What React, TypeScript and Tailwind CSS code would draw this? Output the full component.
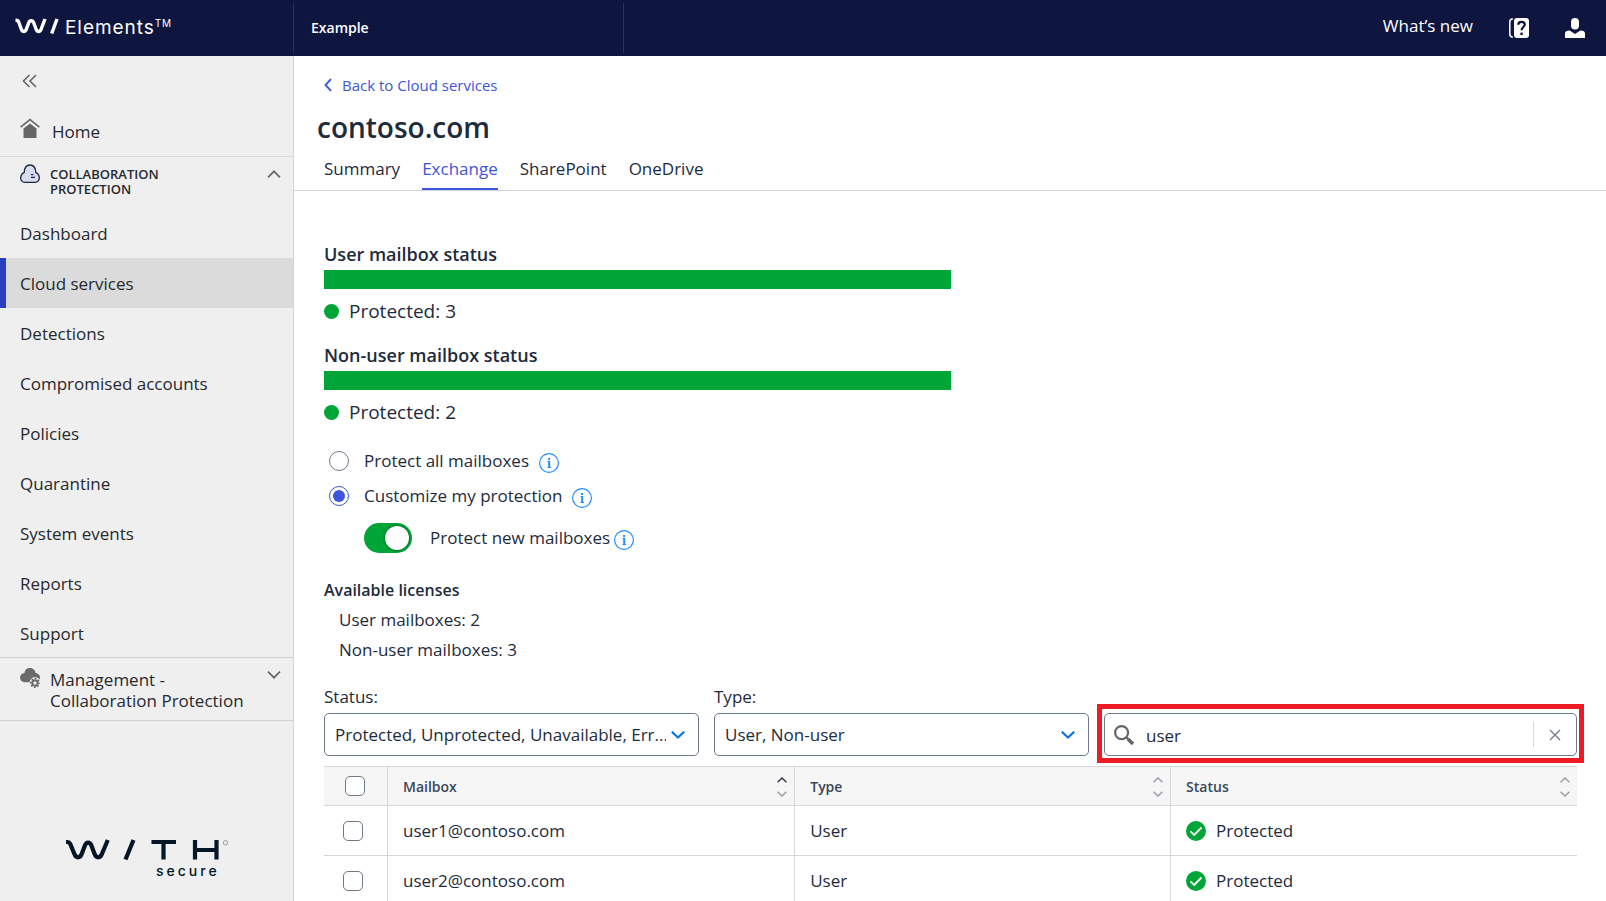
import { useState } from "react";

const NAV_ITEMS = [
  "Dashboard",
  "Cloud services",
  "Detections",
  "Compromised accounts",
  "Policies",
  "Quarantine",
  "System events",
  "Reports",
  "Support",
];

const TABS = ["Summary", "Exchange", "SharePoint", "OneDrive"];

const MAILBOXES = [
  { address: "user1@contoso.com", type: "User", status: "Protected" },
  { address: "user2@contoso.com", type: "User", status: "Protected" },
];

type ChevronProps = { className: string; d: string; box: string; width?: number };

function Chevron({ className, d, box, width = 2 }: ChevronProps) {
  return (
    <svg className={className} viewBox={box} fill="none" stroke="currentColor" strokeWidth={width} aria-hidden="true">
      <path d={d} />
    </svg>
  );
}

function HomeIcon() {
  return (
    <svg className="h-5 w-5 shrink-0" viewBox="0 0 20 20" aria-hidden="true">
      <path d="M0.6 9.1 10 1.6l9.400 7.500" fill="none" stroke="#6a6a6a" strokeWidth="1.700" />
      <path d="M10 5.400 16.500 10.500V20h-13v-9.500z" fill="#666" />
    </svg>
  );
}

function CloudIcon() {
  return (
    <svg className="h-5 w-5 shrink-0" viewBox="0 0 20 20" aria-hidden="true">
      <path
        d="M4.800 18.400h10.400a4.100 4.100 0 0 0 4.100-4.200c0-2.600-1.100-4.900-3.500-5.600C15.600 3.800 13.400 1 10 1S4.400 3.800 4.200 8.600C1.800 9.300.7 11.600.7 14.200a4.100 4.100 0 0 0 4.100 4.200z"
        fill="#d8dcf0"
        stroke="#1d2a3a"
        strokeWidth="1.300"
      />
      <path d="M11 10.700h2.300M11 13.300h4" stroke="#1d2a3a" strokeWidth="1.300" />
    </svg>
  );
}

function CloudGearIcon() {
  return (
    <svg className="h-5 w-5 shrink-0" viewBox="0 0 20 20" aria-hidden="true">
      <path
        d="M4.500 14.300h5.200c.2-3 2.400-5 5.300-5 2 0 3.500.8 4.400 2.200.4-.6.6-1.300.6-2.100 0-2.300-1.700-4-4.300-4.300C15.300 2 12.700 0 9.800 0 6.900 0 4.800 1.900 4.500 4.900 1.800 5.100 0 7 0 9.600c0 2.700 1.900 4.700 4.500 4.700z"
        fill="#6a6a6a"
      />
      <circle cx="15" cy="15" r="2.700" fill="none" stroke="#6a6a6a" strokeWidth="2" />
      <circle cx="15" cy="15" r="4.300" fill="none" stroke="#6a6a6a" strokeWidth="1.600" strokeDasharray="1.700 1.677" strokeDashoffset="0.850" />
    </svg>
  );
}

function HelpIcon() {
  return (
    <svg className="h-5 w-5" viewBox="0 0 20 20" aria-hidden="true">
      <path d="M3.800 0.700C1.800 1 0.800 2 0.800 4v12c0 2 1 3 3 3.300" fill="none" stroke="#fff" strokeWidth="1.500" />
      <rect x="5" y="0" width="15" height="20" rx="3" fill="#fff" />
      <path d="M9.300 6.800c0-2 1.300-3 3.200-3s3.300 1 3.300 2.700c0 2.600-3.200 2.500-3.200 5.700" fill="none" stroke="#0e153f" strokeWidth="2.200" />
      <rect x="11.400" y="14.600" width="2.400" height="2.400" fill="#0e153f" />
    </svg>
  );
}

function UserIcon() {
  return (
    <svg className="h-5 w-5" viewBox="0 0 20 20" fill="#fff" aria-hidden="true">
      <rect x="6" y="0" width="8" height="11.500" rx="4" />
      <path d="M0 20v-4.500C0 13.400 1.600 12.700 4.600 12.500L10 16l5.400-3.500c3 .2 4.600.9 4.600 3V20z" />
    </svg>
  );
}

function InfoButton({ label }: { label: string }) {
  return (
    <button type="button" aria-label={label} className="mt-1 block h-5 w-5 shrink-0">
      <svg className="h-5 w-5" viewBox="0 0 20 20" fill="none" stroke="#1f8fff" aria-hidden="true">
        <circle cx="10" cy="10" r="9.400" strokeWidth="1.200" />
        <path d="M8.500 8.500h1.500M8.500 14.500h3.500" strokeWidth="1" />
        <path d="M10.200 8v7M10.100 5v2" strokeWidth="2" />
      </svg>
    </button>
  );
}

function CheckBadge() {
  return (
    <svg className="h-5 w-5 shrink-0" viewBox="0 0 20 20" aria-hidden="true">
      <circle cx="10" cy="10" r="10" fill="#00a537" />
      <path d="m4.400 10.400 3.800 3.500 7.300-7.400" fill="none" stroke="#fff" strokeWidth="1.800" />
    </svg>
  );
}

function SearchIcon() {
  return (
    <svg className="h-5 w-5 shrink-0" viewBox="0 0 20 20" fill="none" stroke="#666" aria-hidden="true">
      <circle cx="7.600" cy="7.600" r="6.500" strokeWidth="2.200" />
      <path d="m12.300 12.300 2 2" strokeWidth="2.200" />
      <path d="m14 14 5 5" strokeWidth="3.600" />
    </svg>
  );
}

function BrandMark() {
  return (
    <svg className="h-4 w-11" viewBox="0 0 44 16" fill="none" stroke="#fff" strokeWidth="3.400" aria-hidden="true">
      <path d="M.5 2.300h.8c1.500 0 2 .6 2.500 2l2.500 6.900c1 3 4 3 5 0l2.400-6.400c1-2.800 4-2.800 5 0l2.400 6.400c1 3 4 3 5 0L30 1" />
      <path d="M42 1l-5.300 14.500" />
    </svg>
  );
}

function SortArrows({ up }: { up: boolean }) {
  return (
    <span className="flex flex-col gap-2 pt-0.5">
      <Chevron className={up ? "h-1.5 w-2.5 text-[#2f3b4a]" : "h-1.5 w-2.5 text-[#97a0aa]"} box="0 0 10 6" d="M.6 5.300 5 1l4.400 4.300" width={1.5} />
      <Chevron className="h-1.5 w-2.5 text-[#97a0aa]" box="0 0 10 6" d="M.6.7 5 5 9.400.7" width={1.5} />
    </span>
  );
}

function Header() {
  return (
    <header className="flex h-14 shrink-0 items-center bg-[#0e153f] text-white">
      <a href="#home" className="flex h-full w-[293px] shrink-0 items-start gap-1.5 pt-[18px] pl-[15px]">
        <BrandMark />
        <span className="flex items-start pt-px font-['Inter'] text-[19px] leading-[18px] tracking-wider">
          Elements<span className="text-[10px] leading-2">TM</span>
        </span>
      </a>
      <div className="flex h-[50px] w-[331px] items-center border-x border-[#2b3261] pb-0.5 pl-[17px] text-[14px] font-semibold">
        Example
      </div>
      <div className="ml-auto flex items-center pr-[21px]">
        <a href="#whats-new" className="pb-1 text-[17px]">What’s new</a>
        <button type="button" aria-label="Help" className="ml-9">
          <HelpIcon />
        </button>
        <button type="button" aria-label="Account" className="ml-9">
          <UserIcon />
        </button>
      </div>
    </header>
  );
}

function Sidebar() {
  return (
    <aside className="flex w-[294px] shrink-0 flex-col border-r border-[#d5d5d5] bg-[#efefef] text-[17px] text-[#26292e]">
      <button type="button" aria-label="Collapse menu" className="mt-[18px] ml-[22px] h-3.5 w-4 text-[#6a6a6a]">
        <Chevron className="h-3.5 w-4" box="0 0 16 14" d="M7.500 1 1.500 7l6 6M14 1 8 7l6 6" width={1.700} />
      </button>
      <a href="#home" className="mt-[30px] flex h-[39px] items-start gap-3 border-b border-[#d9dadb] pl-5">
        <HomeIcon />
        <span className="pt-0.5 leading-6">Home</span>
      </a>
      <button type="button" aria-expanded="true" className="flex h-[51px] items-start pt-[7px] pr-3 pl-5 text-left">
        <CloudIcon />
        <span className="flex-1 pt-[3px] pl-2.5 text-[13px] leading-[15px] font-semibold">
          COLLABORATION
          <br />
          PROTECTION
        </span>
        <Chevron className="mt-1.5 h-2 w-3.5 text-[#666]" box="0 0 14 8" d="M1 7.300 7 1.300l6 6" width={1.700} />
      </button>
      <nav aria-label="Collaboration protection" className="-mb-px">
        {NAV_ITEMS.map((item) => (
          <a
            key={item}
            href="#section"
            aria-current={item === "Cloud services" ? "page" : undefined}
            className={
              item === "Cloud services"
                ? "flex h-[50px] items-center border-l-[6px] border-[#2a3fba] bg-[#dbdbdb] pt-0.5 pl-3.5"
                : "flex h-[50px] items-center pt-0.5 pl-5"
            }
          >
            {item}
          </a>
        ))}
      </nav>
      <button type="button" aria-expanded="false" className="flex h-16 items-start border-y border-[#cfd0d1] pt-2.5 pr-3 pl-5 text-left">
        <CloudGearIcon />
        <span className="flex-1 pt-px pl-2.5 leading-[21px]">
          Management -
          <br />
          Collaboration Protection
        </span>
        <Chevron className="mt-[3px] h-2 w-3.5 text-[#666]" box="0 0 14 8" d="M1 .7l6 6 6-6" width={1.700} />
      </button>
      <div className="mt-auto pb-[22px] pl-[66px]">
        <svg className="h-10 w-[164px]" viewBox="0 0 164 40" role="img" aria-label="WithSecure" fill="none" stroke="#051626" strokeWidth="4.200">
          <path d="M0 3h1.200c2 0 2.700 1 3.400 2.800L8.300 14.800c1.700 4.700 5.800 4.700 7.500 0l3-8c1.500-4.200 5.200-4.200 6.700 0l3 8c1.700 4.700 5.800 4.700 7.500 0L41.800 1" />
          <path d="M67.500 1 59.500 20.500" />
          <path d="M85.500 3H110M97.500 3v17.500" />
          <path d="M129 1v19.500M150.500 1v19.500M129 11h21" />
          <circle cx="159.500" cy="3.800" r="2.200" stroke="#7c858d" strokeWidth="0.800" />
          <text x="90" y="37" fill="#051626" stroke="none" className="font-['Inter'] text-[14px] font-medium tracking-[3px]">
            secure
          </text>
        </svg>
      </div>
    </aside>
  );
}

function StatusBar({ title, count }: { title: string; count: number }) {
  return (
    <section>
      <h2 className="text-[18px] leading-7 font-semibold">{title}</h2>
      <div className="mt-0.5 h-[19px] w-1/2 bg-[#00a537]" />
      <p className="mt-2 flex items-center gap-2.5 text-[19px] leading-7">
        <span className="h-[15px] w-[15px] rounded-full bg-[#00a537]" />
        Protected: {count}
      </p>
    </section>
  );
}

function Protection() {
  const [mode, setMode] = useState("custom");
  const [protectNew, setProtectNew] = useState(true);
  const radio =
    "h-5 w-5 shrink-0 appearance-none rounded-full border border-[#6f7a88] bg-white checked:border-[#3d55dc] checked:bg-[#3d55dc] checked:bg-clip-content checked:p-[3px]";
  return (
    <div className="mt-[23px] text-[17px] leading-6">
      <div className="flex h-6 items-center pl-[5px]">
        <input id="all" type="radio" name="mode" className={radio} checked={mode === "all"} onChange={() => setMode("all")} />
        <label htmlFor="all" className="mr-2.5 pl-[15px]">Protect all mailboxes</label>
        <InfoButton label="About protecting all mailboxes" />
      </div>
      <div className="mt-[11px] flex h-6 items-center pl-[5px]">
        <input id="custom" type="radio" name="mode" className={radio} checked={mode === "custom"} onChange={() => setMode("custom")} />
        <label htmlFor="custom" className="mr-2.5 pl-[15px]">Customize my protection</label>
        <InfoButton label="About custom protection" />
      </div>
      <div className="mt-[15px] flex h-[30px] items-center pl-10">
        <input
          id="new-mailboxes"
          type="checkbox"
          role="switch"
          checked={protectNew}
          onChange={() => setProtectNew(!protectNew)}
          className="flex h-[30px] w-12 shrink-0 appearance-none items-center rounded-full bg-gray-400 p-[3px] before:h-6 before:w-6 before:rounded-full before:bg-white before:shadow-[0_0_3px_rgba(0,0,0,0.6)] before:content-[''] checked:justify-end checked:bg-[#00a537]"
        />
        <label htmlFor="new-mailboxes" className="mr-1 pl-[18px]">Protect new mailboxes</label>
        <InfoButton label="About protecting new mailboxes" />
      </div>
    </div>
  );
}

function FilterSelect({ id, label, value }: { id: string; label: string; value: string }) {
  return (
    <div className="min-w-0 flex-[375]">
      <label htmlFor={id} className="block leading-6">{label}</label>
      <div className="relative mt-1">
        <select id={id} className="block h-[43px] w-full appearance-none rounded-[5px] border border-[#6f7a88] bg-white pr-8 pl-2.5">
          <option>{value}</option>
        </select>
        <span className="pointer-events-none absolute inset-y-0 right-3.5 flex items-center text-[#0b74e5]">
          <Chevron className="h-2 w-3.5" box="0 0 14 8" d="M.8.7 7 6.500 13.200.7" width={2.200} />
        </span>
      </div>
    </div>
  );
}

function Filters() {
  const [query, setQuery] = useState("user");
  return (
    <div className="mt-5 flex items-end gap-[15px] text-[17px]">
      <FilterSelect id="status" label="Status:" value="Protected, Unprotected, Unavailable, Err..." />
      <FilterSelect id="type" label="Type:" value="User, Non-user" />
      <div className="relative min-w-0 flex-[473]">
        <div className="flex h-[43px] items-center rounded-[5px] border border-[#6f7a88] bg-white pl-[9px]">
          <SearchIcon />
          <input
            type="text"
            aria-label="Search mailboxes"
            value={query}
            onChange={(e) => setQuery(e.target.value)}
            className="min-w-0 flex-1 pt-0.5 pl-3 outline-none"
          />
          <button type="button" aria-label="Clear search" onClick={() => setQuery("")} className="flex h-[25px] w-[43px] items-center justify-center border-l border-[#d4d6d9] text-[#6f7a88]">
            <Chevron className="h-3 w-3" box="0 0 12 12" d="m1 1 10 10M11 1 1 11" width={1.300} />
          </button>
        </div>
        <div className="pointer-events-none absolute -inset-x-[7px] -top-[9px] -bottom-[7px] border-[5px] border-[#ed1c24]" />
      </div>
    </div>
  );
}

function MailboxTable() {
  const box = "mx-auto block h-5 w-5 appearance-none rounded-[5px] border border-[#6f7a88] bg-white checked:bg-[#3d55dc]";
  const head = "border-y border-r border-[#d4d6d9] pr-[7px] pl-[15px] text-left text-[14px] font-semibold text-[#3b4756] last:border-r-0";
  const cell = "border-r border-b border-[#d4d6d9] pl-[15px] last:border-r-0";
  return (
    <table className="mt-2.5 w-full table-fixed border-separate border-spacing-0 text-[17px]">
      <colgroup>
        <col className="w-16" />
        <col className="w-[32.5%]" />
        <col className="w-[30%]" />
        <col />
      </colgroup>
      <thead>
        <tr className="h-10 bg-[#f6f6f6]">
          <th className="border-y border-r border-[#d4d6d9] px-0 pr-0.5">
            <input type="checkbox" aria-label="Select all mailboxes" className={box} />
          </th>
          {["Mailbox", "Type", "Status"].map((name) => (
            <th key={name} scope="col" className={head}>
              <button type="button" className="flex w-full items-center justify-between">
                {name}
                <SortArrows up={name === "Mailbox"} />
              </button>
            </th>
          ))}
        </tr>
      </thead>
      <tbody>
        {MAILBOXES.map((row) => (
          <tr key={row.address} className="h-[50px]">
            <td className="border-r border-b border-[#d4d6d9] pr-1.5">
              <input type="checkbox" aria-label={`Select ${row.address}`} className={box} />
            </td>
            <td className={cell}>{row.address}</td>
            <td className={cell}>{row.type}</td>
            <td className={cell}>
              <span className="flex items-center gap-2.5">
                <CheckBadge />
                {row.status}
              </span>
            </td>
          </tr>
        ))}
      </tbody>
    </table>
  );
}

export default function App() {
  return (
    <div className="flex h-screen flex-col overflow-hidden bg-white font-['Open_Sans',sans-serif] text-[#1d2b3c]">
      <Header />
      <div className="flex min-h-0 flex-1">
        <Sidebar />
        <main className="min-w-0 flex-1 overflow-hidden">
          <a href="#cloud-services" className="mt-[17px] ml-[30px] flex w-fit items-center gap-2.5 text-[15px] leading-6 text-[#3d55dc]">
            <Chevron className="h-3.5 w-2" box="0 0 8 14" d="M7 1.200 1.500 7 7 12.800" width={1.900} />
            Back to Cloud services
          </a>
          <h1 className="mt-3 pl-[23px] text-[28px] leading-[37px] font-semibold">contoso.com</h1>
          <nav aria-label="Service" className="flex h-[45px] gap-[22px] border-b border-[#d4d6d9] pl-[30px] text-[17px]">
            {TABS.map((tab) => (
              <a
                key={tab}
                href="#tab"
                aria-current={tab === "Exchange" ? "page" : undefined}
                className={
                  tab === "Exchange"
                    ? "flex items-center border-b-2 border-[#3d55dc] pt-1 text-[#3d55dc]"
                    : "flex items-center border-b-2 border-transparent pt-1"
                }
              >
                {tab}
              </a>
            ))}
          </nav>
          <div className="pt-[49px] pr-[29px] pl-[30px]">
            <div className="flex flex-col gap-4">
              <StatusBar title="User mailbox status" count={3} />
              <StatusBar title="Non-user mailbox status" count={2} />
            </div>
            <Protection />
            <section className="mt-[22px] text-[17px] leading-[30px]">
              <h2 className="text-[16px] font-semibold">Available licenses</h2>
              <p className="pl-[15px]">User mailboxes: 2</p>
              <p className="pl-[15px]">Non-user mailboxes: 3</p>
            </section>
            <Filters />
            <MailboxTable />
          </div>
        </main>
      </div>
    </div>
  );
}
